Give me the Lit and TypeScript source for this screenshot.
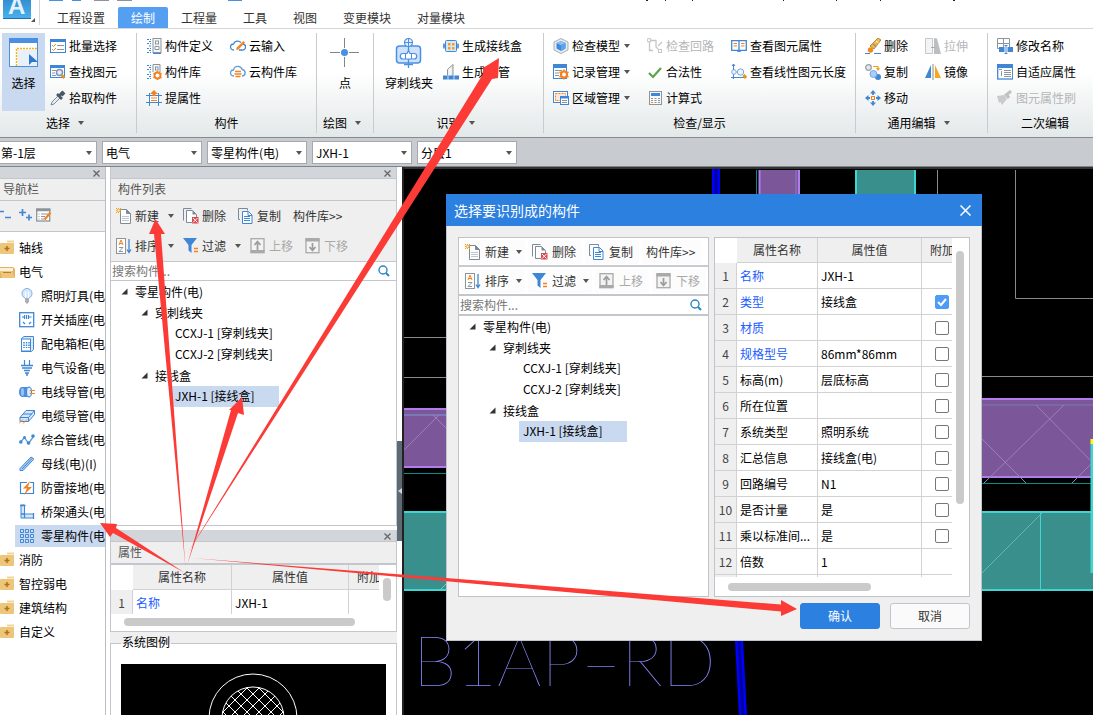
import { LitElement, html, svg, css, nothing } from "lit";
import { customElement, property } from "lit/decorators.js";
import { classMap } from "lit/directives/class-map.js";

const B = "#3f87d4";
const O = "#f58220";
const G = "#8b959b";

/* 16 x 16 glyphs, keyed by name */
const glyphs: Record<string, unknown> = {
  batch: svg`<rect x=".5" y="1.5" width="15" height="13" fill="#fff" stroke="${B}"/><rect x="0" y="1" width="16" height="3" fill="${B}"/><path d="M2 7l1.500 1.500L6 6M2 11l1.500 1.500L6 10" fill="none" stroke="${O}"/><path d="M7 7.500h7M7 11.500h7" stroke="${G}"/>`,
  find: svg`<rect x=".5" y="1.500" width="14" height="12" fill="#fff" stroke="${B}"/><rect x="0" y="1" width="15" height="3" fill="${B}"/><path d="M2 6.500h4M2 9h3M2 11.500h4" stroke="${G}"/><circle cx="9.500" cy="8.500" r="3" fill="#e6eef8" stroke="#7a94bd" stroke-width="1.500"/><path d="M11.500 11l3 3" stroke="#e8951c" stroke-width="2.600"/>`,
  pick: svg`<path d="M1 15l1-3 6-6 2 2-6 6z" fill="#e6edf5" stroke="#7d8b98"/><path d="M7 4l5 5M9 6l4-4" stroke="#4a5864" stroke-width="2.600"/><path d="M11 5l3-3" stroke="#4a5864" stroke-width="4"/>`,
  define: svg`<path d="M1 1.500h4M1 5.500h4M1 10.500h4M1 14.500h4M3 3.500h2M3 8h2M3 12.500h2" stroke="${B}" stroke-dasharray="2 1"/><rect x="7" y=".5" width="8" height="14" fill="#f4f6f8" stroke="${G}"/><path d="M7 15.500h8" stroke="${B}"/><rect x="9.500" y="3" width="3" height="3" fill="#fff" stroke="${G}"/><path d="M9 8.500h4v3H9z" fill="#fff" stroke="${G}"/>`,
  lib: svg`<path d="M1 1.500h4M1 5.500h4M1 10.500h4M1 14.500h4M3 3.500h2M3 8h2M3 12.500h2" stroke="${B}" stroke-dasharray="2 1"/><path d="M7 8V.5h7V8" fill="#f4f6f8" stroke="${G}"/><rect x="9.500" y="3" width="2.500" height="3" fill="#fff" stroke="${G}"/><circle cx="11.500" cy="11.500" r="3" fill="#fff" stroke="${O}" stroke-width="2"/><path d="M11.500 7v2M11.500 14v2M7.500 9.200l1.500 1M14 13l1.500 1M7.500 13.800l1.500-1M14 10l1.500-1" stroke="${O}" stroke-width="1.500"/>`,
  attr: svg`<path d="M0 5.500h16M0 12.500h16M3.500 3v13M12.500 3v13" stroke="${B}"/><rect x="4" y="6" width="8" height="6" fill="#fff"/><path d="M8 0l4 4H9.500v2h-3V4H4z" fill="${O}"/><path d="M5 8h6M5 10.500h6" stroke="${O}"/>`,
  cloudin: svg`<path d="M4 12H3.500a3 3 0 0 1 0-6A4.500 4.500 0 0 1 11 4.500" fill="none" stroke="${B}" stroke-width="1.300"/><path d="M13 6a3 3 0 0 1-1 6H9" fill="none" stroke="${B}" stroke-width="1.300"/><path d="M6 12l.8-2.500L13.500 3l1.500 1.500-6.500 7z" fill="${O}"/>`,
  cloudlib: svg`<path d="M4 12H3.500a3 3 0 0 1 0-6 4.500 4.500 0 0 1 8.700-.5A3.300 3.300 0 0 1 12.500 12H12" fill="none" stroke="#5e9adb" stroke-width="1.300"/><path d="M5 7.500h6M4.500 10h7M5.500 12.500h5" stroke="${O}" stroke-width="1.300"/>`,
  box: svg`<path d="M0 8h16" stroke="${B}"/><path d="M1 5.500v5M15 5.500v5" stroke="${B}" stroke-width="1.500"/><rect x="2.500" y="2.500" width="11" height="11" rx="1" fill="#d6e7fb" stroke="${B}"/><path d="M5 5h2.500v2.500H5zM9 5h2.500v2.500H9zM5 9h2.500v2.500H5zM9 9h2.500v2.500H9z" fill="#f0a020"/>`,
  pipe: svg`<path d="M4.500 12V5.500L10 .5v11.500" fill="#e9edf0" stroke="${G}"/><path d="M7 12V4" stroke="#fff"/><rect x="0" y="11.500" width="16" height="4" fill="${B}"/><path d="M5 11v5M11 11v5" stroke="#cfe0f4"/>`,
  model: svg`<path d="M8 .5l7 3.500v8l-7 3.500L1 12V4z" fill="#e8edf1" stroke="#a5adb3"/><path d="M8 3l4.500 2v5.500L8 13l-4.500-2.500V5z" fill="#3d8be0"/><path d="M8 3l4.500 2L8 7.300 3.500 5z" fill="#8fc0f5"/><path d="M8 7.300V13l4.500-2.500V5z" fill="#5fa3ea"/>`,
  record: svg`<rect x=".5" y="1" width="13" height="13.500" fill="#fff" stroke="${B}"/><rect x="0" y="0" width="14" height="4" fill="${B}"/><path d="M2 6.500h7M2 9h4M2 11.500h4" stroke="${G}"/><circle cx="11" cy="10.500" r="3" fill="#fff" stroke="${O}" stroke-width="2.200"/><path d="M11 5.500v2M11 13.500v2M6.500 8l2 1M13.500 12l2 1M6.500 13l2-1M13.500 9l2-1" stroke="${O}" stroke-width="1.600"/>`,
  region: svg`<rect x=".5" y="1.500" width="14" height="11" fill="#fff" stroke="${B}"/><rect x="2.500" y="3.500" width="10" height="7" fill="#fbe9db" stroke="${O}" stroke-dasharray="2 1"/><rect x="7.500" y="6.500" width="8" height="8" fill="#fff" stroke="${B}"/><path d="M7 7.500h9" stroke="${B}" stroke-width="2"/><path d="M9 10.500h5M9 12.500h5" stroke="${G}"/>`,
  circuit: svg`<path d="M2.500 3v9.500H6M3 2.500h6V9l2 2M11 8l4-4M12 13.500h2" fill="none" stroke="#c3c6c8" stroke-width="1.300"/><rect x=".7" y=".7" width="3" height="3" fill="#fff" stroke="#c3c6c8"/><rect x="11.500" y="11.500" width="3" height="3" fill="#fff" stroke="#c3c6c8"/>`,
  legal: svg`<path d="M2 9l4 4 8-9" fill="none" stroke="#5aa346" stroke-width="2.200"/>`,
  calc: svg`<rect x="2.500" y="1.500" width="12" height="13" fill="#f6f8f9" stroke="${G}"/><rect x="4" y="3" width="9" height="3" fill="${B}"/><path d="M4 8.500h9M4 10.500h9M4 12.500h9" stroke="${G}" stroke-dasharray="2 1.500"/><path d="M4 10.500h2M4 12.500h2" stroke="${O}"/>`,
  book: svg`<path d="M.7 2.700h14.600v9.600H.7z" fill="#fff" stroke="${B}" stroke-width="1.300"/><path d="M8 3v11M6 13h4" stroke="${B}" stroke-width="1.300"/><path d="M2.500 5.500h3.500M2.500 8h3.500M10 5.500h3.500M10 8h3.500" stroke="${O}" stroke-width="1.200"/>`,
  length: svg`<path d="M2.500 0v15M1 2l1.500-2L4 2M0 13.500h15" fill="none" stroke="${B}"/><circle cx="3" cy="8" r="2.300" fill="#eef4fb" stroke="#7aa5d8"/><circle cx="9.500" cy="8" r="3.200" fill="#eef4fb" stroke="#7aa5d8"/><path d="M12.500 11l2.500 3" stroke="#e8951c" stroke-width="3"/>`,
  erase: svg`<path d="M0 15.500h5M9 15.500h7" stroke="${B}"/><path d="M13 0l3 2-7 9-4-3z" fill="#f4b942" stroke="#8a6a2a" stroke-width=".7"/><path d="M11 3l2.500 2" stroke="#fff6d8"/><path d="M8 6l3 2.500" stroke="#8f8f8f" stroke-width="1.500"/><circle cx="5.500" cy="12" r="2.700" fill="#f58a1c"/>`,
  stretch: svg`<path d="M.5.5h7v15h-7z" fill="#f4f4f4" stroke="#c6c9cb"/><path d="M9 0l3 .5L16 16H9z" fill="#bcbfc1"/><path d="M6 9.500h4" stroke="#aaa"/>`,
  dup: svg`<circle cx="3.500" cy="3.500" r="2.800" fill="#e6e9eb" stroke="#9aa2a8" stroke-width="1.300"/><path d="M8 2.500h5V5M11.500 4l1.500 2 1.500-2" fill="none" stroke="#f0a020" stroke-width="1.200"/><circle cx="13" cy="13" r="3" fill="#3f87d4"/><circle cx="8.500" cy="10" r="3.500" fill="#a9cdf5" stroke="#6fa8e8"/>`,
  mirror: svg`<path d="M6 1v13H0z" fill="${B}"/><path d="M10 1v13h6z" fill="#f7a81b"/><path d="M8 0v16" stroke="#8a8a8a"/>`,
  move: svg`<path d="M8 0l3 3.500H5zM8 16l3-3.500H5zM0 8l3.500-3v6zM16 8l-3.500-3v6z" fill="${B}"/><path d="M8 2v3M8 11v3M2 8h3M11 8h3" stroke="${B}" stroke-width="1.800"/><rect x="6.500" y="6.500" width="3" height="3" fill="#fff" stroke="${O}"/>`,
  rename: svg`<path d="M.5.5h12v10H.5zM6.500.5v10M.5 5.500h12" fill="none" stroke="${G}"/><rect x="2" y="9" width="14" height="5" fill="${B}"/><path d="M9 7v9M7 7.500h4M7 15.500h4" stroke="#fff" stroke-width="3"/><path d="M9 7v9M7.500 7.500h3M7.500 15.500h3" stroke="${B}"/>`,
  adapt: svg`<rect x=".7" y="1" width="15" height="14" fill="#fff" stroke="${B}" stroke-width="1.300"/><rect x="0" y="0" width="16" height="4" fill="${B}"/><path d="M2 5.500h3M4.500 7v5" stroke="${G}"/><path d="M7 6.500h7M7 8.500h7M7 10.500h7M7 12.500h7" stroke="${G}"/>`,
  brush: svg`<path d="M0 6l7-1 3 4-5 6-1.500-3-1.500 1z" fill="#c9cbcc"/><path d="M8 6l6-5M9 4l3 4" stroke="#bfc2c4" stroke-width="3"/>`,
  create: svg`<path d="M4.500 1.500h6l4 4v10h-10z" fill="#fff" stroke="#7d8b98"/><path d="M10.500 1.500v4h4" fill="#7d8b98" stroke="#7d8b98"/><path d="M6 8.500h7M6 10.500h7M6 12.500h7" stroke="#bfc7cd"/><path d="M0 0l5 5M5 0L0 5M2.500 0v5M0 2.500h5" stroke="#f0a020"/><rect x="1.500" y="1.500" width="2" height="2" fill="#fff6d0"/>`,
  remove: svg`<path d="M.5 12.500V.5h8" fill="none" stroke="#7d8b98"/><path d="M3.500 2.500h6l4 4v8h-10z" fill="#fff" stroke="#7d8b98"/><path d="M9.500 2.500l4 4h-4z" fill="#7d8b98"/><rect x="9" y="9" width="6.500" height="6.500" fill="#d9494f"/><path d="M10 10l4.500 4.500M14.500 10L10 14.500" stroke="#fff"/>`,
  copy: svg`<path d="M2 11.500H.5V.5h9v2" fill="none" stroke="#7d8b98"/><path d="M4.500 3.500h6l3.500 3.500v8.500H4.500z" fill="#fff" stroke="${B}"/><path d="M10 3.500v4h4" fill="none" stroke="${B}"/><path d="M6 8.500h6M6 10.500h6M6 12.500h6" stroke="${B}"/>`,
  sort: svg`<rect x=".5" y=".5" width="9" height="15" fill="#fff" stroke="${G}"/><path d="M3 7l2-5 2 5M3.500 5.500h3" fill="none" stroke="${O}"/><path d="M3 9.500h4l-4 4h4" fill="none" stroke="${G}"/><path d="M13 1v13M11 11.500l2 3 2-3" fill="none" stroke="${B}" stroke-width="1.300"/>`,
  filter: svg`<path d="M0 0h14L8.500 7v8l-3-2.500V7z" fill="${B}"/><path d="M11 10.500h4M11 13.500h4" stroke="${O}" stroke-width="1.300"/>`,
  up: svg`<rect x="1" y=".7" width="13" height="14" fill="#f3f3f3" stroke="#a9a9a9" stroke-width="1.300"/><path d="M.5 13.500h14" stroke="#a9a9a9" stroke-width="3"/><path d="M7.500 12V4M4.500 7l3-3.500 3 3.500" fill="none" stroke="#9c9c9c" stroke-width="1.700"/>`,
  down: svg`<rect x="1" y=".7" width="13" height="14" fill="#f3f3f3" stroke="#a9a9a9" stroke-width="1.300"/><path d="M.5 2h14" stroke="#a9a9a9" stroke-width="3"/><path d="M7.500 5v7M4.500 9l3 3.500 3-3.500" fill="none" stroke="#9c9c9c" stroke-width="1.700"/>`,
  folder: svg`<path d="M7 1.500h7" stroke="#f3d497" stroke-width="2"/><rect x="0" y="3" width="14" height="11" rx="1" fill="#eec679"/><path d="M7 6v5M4.500 8.500h5" stroke="#a87420" stroke-width="1.500"/>`,
  folderopen: svg`<path d="M0 3h13l2 2v9H0z" fill="#e3b25e"/><path d="M0 4h13v3H0z" fill="#fbf1d8"/><path d="M0 7h12l3 7H2z" fill="#eec679"/><path d="M3 8.500h8" stroke="#b57f2b"/>`,
  lamp: svg`<circle cx="8" cy="5.500" r="5" fill="#d8e9fb" stroke="#7fb0e6"/><path d="M6.500 4v6M9.500 4v6" stroke="#fff"/><path d="M6 10h4v4l-2 2-2-2z" fill="#a8afb5"/>`,
  socket: svg`<rect x=".7" y=".7" width="14" height="14" fill="#fff" stroke="${B}" stroke-width="1.300"/><path d="M3 5h2.500M5.500 3v4M7.500 3v4M9.500 3v4M10 5h2.500M4 10l2 2M12 10l-2 2" stroke="${B}" stroke-width="1.200"/>`,
  cabinet: svg`<path d="M2.500 2.500L5 .5h9.500v13l-2 2h-10z" fill="#dceafa" stroke="${B}"/><rect x="2.500" y="3" width="9" height="12" fill="#fff" stroke="${B}"/><path d="M5 6v6M7.500 6v6M10 6v6" stroke="${B}" stroke-width="1.500" stroke-dasharray="1.500 1"/>`,
  device: svg`<path d="M5.500 0v5M10.500 0v5" stroke="${B}" stroke-width="1.200"/><path d="M2 5.500h12M3 8h10M5 10.500h6M6 13h4M8 13v3" stroke="${B}" stroke-width="1.500"/>`,
  wire: svg`<path d="M3 3h8v10H3A3 5 0 0 1 3 3z" fill="#4a90df"/><ellipse cx="10" cy="8" rx="2.500" ry="5" fill="#d6e7fb" stroke="${B}"/><path d="M11 6.500h5M11 9.500h5" stroke="${O}"/><ellipse cx="3.500" cy="8" rx="1.500" ry="4" fill="#9dc5f3"/>`,
  cable: svg`<path d="M1 9.500l6-7h8.500v4l-6 7H1z" fill="#d6e7fb" stroke="${B}"/><path d="M1 9.500h8.500l6-7M9.500 9.500v4M4 6h9" fill="none" stroke="${B}"/><path d="M0 15.500l4-4M4 15.500l4-4" stroke="${O}"/>`,
  lines: svg`<path d="M1.500 10l4-4.500 4 6 5-7" fill="none" stroke="#5e9adb" stroke-width="1.300"/><circle cx="1.800" cy="10" r="1.800" fill="${B}"/><circle cx="5.500" cy="5.500" r="1.500" fill="${B}"/><circle cx="9.500" cy="11" r="1.800" fill="${B}"/><circle cx="14" cy="4" r="1.800" fill="${B}"/>`,
  bus: svg`<path d="M1 12.500L12 1l2.500 1.500v1L4 14.500H1z" fill="#a9cdf5" stroke="${B}"/><path d="M3 13L13 2.500" stroke="${B}"/>`,
  bolt: svg`<path d="M8 2.500H1.500v11H8M11 2.500h3.500v11H8" fill="#fff" stroke="${B}" stroke-width="1.200"/><path d="M11 1L4 8.500h4L5 15l8-8H9z" fill="${O}"/>`,
  elbow: svg`<path d="M2 1h3.500v9h9v4H2z" fill="#d6e7fb" stroke="${B}"/><path d="M1 1.500h5.500M14.500 9v6M2 10h3.500v4" fill="none" stroke="${B}" stroke-width="1.300"/>`,
  grid: svg`<g fill="#cfe2f8" stroke="${B}"><path d="M1.500 1.500h3v3h-3zM6.500 1.500h3v3h-3zM11.500 1.500h3v3h-3zM1.500 6.500h3v3h-3zM6.500 6.500h3v3h-3zM11.500 6.500h3v3h-3zM1.500 11.500h3v3h-3zM6.500 11.500h3v3h-3zM11.500 11.500h3v3h-3z"/></g>`,
  minus: svg`<path d="M0 4.500h4M5 10.500h6" stroke="${B}" stroke-width="1.600"/>`,
  plus: svg`<path d="M1 5.500h7M4.500 2v7M8 10.500h6M11 7.500v6" stroke="${B}" stroke-width="1.700"/>`,
  edit: svg`<rect x=".7" y="2" width="13" height="12" fill="#fff" stroke="${G}" stroke-width="1.300"/><path d="M0 3h14.500" stroke="${G}" stroke-width="2.500"/><path d="M2.500 7h1M5 7h7M2.500 9.500h1M5 9.500h4M2.500 12h1M5 12h3" stroke="${G}"/><path d="M8.500 12.500l6-7" stroke="${O}" stroke-width="2.200"/>`,
  search: svg`<circle cx="7" cy="7" r="4" fill="none" stroke="#2b86c5" stroke-width="1.400"/><path d="M10 10l3 3" stroke="#2b86c5" stroke-width="2"/>`,
};

const icon = (name: string) =>
  html`<svg class="ico" width="16" height="16" viewBox="0 0 16 16" aria-hidden="true">${glyphs[name]}</svg>`;
const caret = () =>
  html`<svg class="caret" width="6" height="4" viewBox="0 0 6 4" aria-hidden="true"><path d="M0 0h6L3 4z" fill="#555"/></svg>`;

const base = css`
  * { box-sizing: border-box; }
  button, input, select { font: inherit; color: inherit; margin: 0; }
  button { border: 0; background: none; padding: 0; white-space: nowrap; cursor: default; }
  svg { display: block; flex: none; }
`;

type Item = { icon: string; text: string; menu?: boolean; off?: boolean };

@customElement("ribbon-group")
class RibbonGroup extends LitElement {
  @property() label = "";
  @property({ type: Boolean }) menu = false;
  @property({ attribute: false }) columns: Item[][] = [];
  static styles = [base, css`
    :host { display: flex; flex-direction: column; flex: none; border-right: 1px solid #c9cccf; }
    .body { display: flex; flex: 1; padding: 0 9px; }
    .col { display: flex; flex: none; flex-direction: column; margin-right: 17px; }
    .item { display: flex; align-items: center; gap: 3px; height: 26px; }
    .off { color: #b4b6b8; }
    .label { display: flex; align-items: center; justify-content: center; gap: 8px; height: 20px; }
    .menu { padding-right: 6px; }
    .item .caret { margin-left: 1px; }
  `];
  render() {
    return html`
      <div class="body">
        <slot></slot>
        ${this.columns.map(c => html`<div class="col">${c.map(i => html`
          <button class=${classMap({ item: true, off: !!i.off })} ?disabled=${!!i.off}>${icon(i.icon)}<span>${i.text}</span>${i.menu ? caret() : nothing}</button>`)}</div>`)}
      </div>
      <div class=${classMap({ label: true, menu: this.menu })}><span>${this.label}</span>${this.menu ? caret() : nothing}</div>`;
  }
}

@customElement("component-list")
class ComponentList extends LitElement {
  static styles = [base, css`
    :host { display: flex; flex-direction: column; flex: 1; min-height: 0; min-width: 0; --line: #c3c6cb; }
    .tools { display: flex; flex-direction: column; background: var(--bar, #efefef); border-bottom: var(--find-line, 1px) solid var(--line); }
    .row { display: flex; box-sizing: content-box; align-items: center; gap: var(--tool-gap, 2px); height: var(--tool-h, 30px); padding-left: var(--tool-left, 1px); }
    .row + .row { border-top: var(--row-line, 0); }
    .tool { display: flex; align-items: center; gap: var(--icon-gap, 3px); height: 24px; padding: 0 6px 0 4px; border-radius: 3px; background: var(--tool-bg, none); color: #333; }
    .tool .caret { margin: 0 -3px 0 var(--caret-gap, 6px); }
    .tool:disabled { color: #a9a9a9; }
    .find { display: flex; align-items: center; height: var(--find-h, 19px); background: #fff; border-bottom: var(--find-line, 1px) solid var(--line); padding: 0 4px 0 1px; }
    .find input { flex: 1; min-width: 0; border: 0; outline: 0; padding: 0; height: 16px; line-height: 16px; background: none; }
    .find input::placeholder { color: #777; opacity: 1; }
    .tree { flex: 1; min-height: 0; margin: 0; padding: 0; list-style: none; background: #fff; overflow: hidden; }
    .node { display: flex; align-items: center; height: 21px; gap: 7px; }
    .l0 { padding-left: 10px; }
    .l1 { padding-left: 30px; }
    .l2 { padding-left: 60px; }
    .leaf { display: block; height: 21px; line-height: 20px; padding: 0 24px 0 4px; }
    .on { background: #c9d9f0; }
  `];
  render() {
    const tool = (i: string, t: string, menu = false, off = false) =>
      html`<button class="tool" ?disabled=${off}>${i ? icon(i) : nothing}<span>${t}</span>${menu ? caret() : nothing}</button>`;
    const arrow = html`<svg width="7" height="7" viewBox="0 0 7 7" aria-hidden="true"><path d="M6.500 .5v6H.5z" fill="#333"/></svg>`;
    return html`
      <div class="tools">
        <div class="row">${tool("create", "新建", true)}${tool("remove", "删除")}${tool("copy", "复制")}${tool("", "构件库>>")}</div>
        <div class="row">${tool("sort", "排序", true)}${tool("filter", "过滤", true)}${tool("up", "上移", false, true)}${tool("down", "下移", false, true)}</div>
      </div>
      <div class="find"><input type="text" aria-label="搜索构件" placeholder="搜索构件..." />${icon("search")}</div>
      <ul class="tree">
        <li class="node l0">${arrow}<span>零星构件(电)</span></li>
        <li class="node l1">${arrow}<span>穿刺线夹</span></li>
        <li class="node l2"><span class="leaf">CCXJ-1 [穿刺线夹]</span></li>
        <li class="node l2"><span class="leaf">CCXJ-2 [穿刺线夹]</span></li>
        <li class="node l1">${arrow}<span>接线盒</span></li>
        <li class="node l2"><span class="leaf on">JXH-1 [接线盒]</span></li>
      </ul>`;
  }
}

type Prop = { name: string; value: string; link?: boolean; check?: boolean };

@customElement("property-table")
class PropertyTable extends LitElement {
  @property({ attribute: false }) rows: Prop[] = [];
  static styles = [base, css`
    :host { display: block; overflow: hidden; }
    table { table-layout: fixed; width: 0; border-collapse: separate; border-spacing: 0; }
    .num { width: 22px; }
    .name { width: var(--c1, 81px); }
    .val { width: var(--c2, 104px); }
    .extra { width: 50px; }
    th, td { height: 26px; padding: 0 3px; border-right: 1px solid #d2d2d2; border-bottom: 1px solid #d2d2d2; font-weight: normal; line-height: 18px; text-align: left; white-space: nowrap; overflow: hidden; background: #fff; }
    thead th { height: 25px; background: #efefef; text-align: center; color: #333; }
    thead td { height: 25px; border-color: #fff; }
    tbody th { background: #efefef; text-align: center; color: #444; padding: 0; }
    thead .add { text-align: left; padding-left: 8px; }
    .box { padding-left: 13px; }
    .link { color: #1a5cff; }
    input { appearance: none; display: block; width: 14px; height: 14px; border: 1px solid #777; border-radius: 2px; background: #fff; }
    input:checked { border-color: #4d9cf5; background: #4d9cf5; }
    .cb { display: grid; width: 14px; }
    .cb > * { grid-area: 1 / 1; }
    .cb svg { pointer-events: none; }
  `];
  render() {
    return html`<table>
      <colgroup><col class="num" /><col class="name" /><col class="val" /><col class="extra" /></colgroup>
      <thead><tr><td></td><th scope="col">属性名称</th><th scope="col">属性值</th><th class="add" scope="col">附加</th></tr></thead>
      <tbody>${this.rows.map((r, i) => html`<tr>
        <th scope="row">${r.name ? i + 1 : nothing}</th>
        <td class=${classMap({ link: !!r.link })}>${r.name}</td>
        <td>${r.value}</td>
        <td class="box">${r.check === undefined ? nothing : html`<label class="cb"><input type="checkbox" aria-label=${r.name} .checked=${r.check} />${r.check
          ? html`<svg width="14" height="14" viewBox="0 0 14 14" aria-hidden="true"><path d="M3 7l3 3 5-6" fill="none" stroke="#fff" stroke-width="2"/></svg>` : nothing}</label>`}</td>
      </tr>`)}</tbody></table>`;
  }
}

const dialogRows: Prop[] = [
  { name: "名称", value: "JXH-1", link: true },
  { name: "类型", value: "接线盒", link: true, check: true },
  { name: "材质", value: "", link: true, check: false },
  { name: "规格型号", value: "86mm*86mm", link: true, check: false },
  { name: "标高(m)", value: "层底标高", check: false },
  { name: "所在位置", value: "", check: false },
  { name: "系统类型", value: "照明系统", check: false },
  { name: "汇总信息", value: "接线盒(电)", check: false },
  { name: "回路编号", value: "N1", check: false },
  { name: "是否计量", value: "是", check: false },
  { name: "乘以标准间...", value: "是", check: false },
  { name: "倍数", value: "1" },
  { name: "", value: "" },
];

@customElement("app-root")
class AppRoot extends LitElement {
  static styles = [base, css`
    :host { position: relative; display: flex; flex-direction: column; height: 100vh; overflow: hidden; background: #fff; color: #000; font: 12px/18px "Noto Sans CJK SC", "Noto Sans", sans-serif; }
    .top { display: flex; align-items: flex-end; height: 29px; border-bottom: 1px solid #d5d5d5; }
    .logo { align-self: flex-start; width: 44px; }
    .quick { position: absolute; left: 44px; top: 0; }
    .tab { height: 21px; padding: 0 13px; color: #333; }
    .tab.on { background: #559ff3; color: #fff; border-radius: 2px 2px 0 0; }
    .ribbon { display: flex; height: 109px; padding: 4px 0; background: linear-gradient(#fff 40%, #e3e8e9); border-bottom: 1px solid #868b8f; }
    .g1 { width: 137px; }
    .g2 { width: 180px; }
    .g3 { width: 57px; }
    .g4 { width: 170px; }
    .g5 { width: 312px; }
    .g6 { width: 132px; }
    .g7 { flex: 1 0 108px; border-right: 0; }
    .big { display: flex; flex: none; flex-direction: column; align-items: center; gap: 6px; height: 78px; padding-top: 5px; }
    .pick { width: 43px; margin: 0 5px 0 -7px; background: #c9d9f0; }
    .dot { width: 38px; }
    .clip { margin: 0 10px 0 2px; }
    .combos { display: flex; gap: 5px; height: 29px; padding-top: 3px; background: #c8cbd0; border-bottom: 1px solid #7d868b; }
    .combo { display: grid; width: 100px; height: 23px; }
    .combo:first-child { margin-left: -3px; }
    .combo > * { grid-area: 1 / 1; }
    .combo .caret { justify-self: end; align-self: center; margin-right: 5px; pointer-events: none; }
    select { appearance: none; width: 100px; height: 23px; padding: 0 14px 0 3px; border: 1px solid #a5a8ac; border-radius: 0; background: #fff; }
    .main { display: flex; flex: 1; min-height: 0; }
    .strip { display: flex; justify-content: flex-end; align-items: flex-end; height: 12px; padding: 0 5px 1px 0; background: #d2d5da; border-bottom: 1px solid #c3c6cb; }
    .head { height: 22px; padding-left: 7px; line-height: 20px; background: #efefef; color: #555; border-bottom: 1px solid #c3c6cb; }
    .nav { width: 106px; flex: none; border-right: 1px solid #b9bcc1; overflow: hidden; }
    .nav .head { padding-left: 3px; }
    .navtools { display: flex; align-items: center; gap: 2px; height: 31px; padding-bottom: 3px; background: #efefef; border-bottom: 1px solid #c3c6cb; }
    .navlist { display: flex; flex-direction: column; margin: 0; padding: 4px 0 0; list-style: none; }
    .navlist li { display: flex; align-items: center; height: 24px; gap: 3px; white-space: nowrap; }
    .navlist .sub { height: 22px; margin: 1px 0 1px 15px; padding-left: 4px; gap: 6px; }
    .navlist .on { background: #c9d9f0; }
    .mid { display: flex; flex-direction: column; width: 287px; flex: none; margin-left: 4px; }
    .panel { display: flex; flex-direction: column; border: 1px solid #c3c6cb; border-top: 0; }
    .list { flex: 1; min-height: 0; margin-bottom: 4px; }
    .props .head { height: 23px; border-bottom-width: 2px; }
    .frame { display: grid; grid-template-columns: 1fr 17px; grid-template-rows: auto 1fr; }
    .frame.small { height: 66px; --c1: 99px; --c2: 117px; grid-template-columns: 268px 1fr; grid-template-rows: 49px 1fr; }
    .v, .h { border-radius: 4px; background: #cacaca; }
    .v { width: 8px; margin-left: 4px; }
    .h { height: 8px; }
    .small .v { height: 23px; margin-top: 13px; }
    .small .h { width: 231px; margin: 4px 0 0 13px; }
    .legend { height: 83px; background: #efefef; padding-top: 11px; overflow: hidden; }
    .group { height: 90px; border: 1px solid #c3c6cb; background: #fff; padding: 0 10px; }
    .group span { display: block; width: max-content; margin: -11px 0 0; padding: 0 1px; height: 18px; background: linear-gradient(#efefef 60%, #fff 60%); }
    .group svg { margin-top: 13px; background: #000; width: 100%; }
    .split { width: 5px; flex: none; }
    .grip { height: 100px; margin-top: 274px; padding: 47px 0 0 1px; background: #5c6a75; }
    .canvas { position: relative; flex: 1; min-width: 0; background: #000; overflow: hidden; }
    .dlg { position: absolute; left: 446px; top: 194px; width: 536px; background: #efefef; border: 1px solid #c0c4cc; border-top: 0; }
    .title { display: flex; align-items: center; justify-content: space-between; height: 32px; margin: 0 -1px; padding: 0 11px 0 8px; background: #2c80e0; color: #fff; font-size: 14px; line-height: 20px; }
    .title h2 { margin: 0; font: inherit; }
    .cols { display: flex; gap: 5px; padding: 11px 11px 0; }
    .lp, .rp { height: 360px; border: 1px solid #c0c3c8; background: #fff; }
    .lp { display: flex; flex: none; width: 251px; --bar: #fff; --tool-bg: #fcfcfc; --tool-gap: 3px; --tool-h: 27px; --tool-left: 2px; --icon-gap: 4px; --caret-gap: 3px; --find-h: 20px; --find-line: 2px; --row-line: 2px solid #c8cbd0; }
    .rp { flex: 1; min-width: 0; }
    .rp .frame { height: 358px; grid-template-rows: 339px 1fr; }
    .rp .v { height: 253px; margin-top: 13px; }
    .rp .h { width: 143px; margin: 6px 0 0 13px; }
    .btns { display: flex; justify-content: flex-end; gap: 10px; padding: 6px 11px 11px; }
    .btns button { width: 80px; height: 26px; border-radius: 3px; background: #fafafa; border: 1px solid #c0c4d0; color: #333; }
    .btns .ok { background: #2c80e0; border-color: #2c80e0; color: #fff; }
    .marks { position: absolute; left: 0; top: 0; pointer-events: none; }
    .cad { font: 100 70px/1 Lato, Roboto, sans-serif; }
  `];

  private combo(label: string, value: string) {
    return html`<label class="combo"><select aria-label=${label}><option>${value}</option></select>${caret()}</label>`;
  }

  private close() {
    return html`<svg width="7" height="7" viewBox="0 0 7 7" aria-hidden="true"><path d="M.5 .5l6 6M6.500 .5l-6 6" stroke="#666" stroke-width="1.300"/></svg>`;
  }

  private drawing() {
    return html`<svg width="691" height="548" viewBox="402 167 691 548" aria-hidden="true">
      <path d="M402 167h691" stroke="#333" stroke-width="4"/><path d="M402.500 167v548" stroke="#222" stroke-width="3"/>
      <path d="M716 169v30M739 640l4 76" stroke="#00f" stroke-width="8" fill="none"/>
      <path d="M716 169v30M739 640l4 76" stroke="#00009a" stroke-width="3" fill="none"/>
      <path d="M756.500 170v30" stroke="#0a8a86"/>
      <rect x="759" y="170" width="41" height="30" fill="#7b5799"/><path d="M759.500 170v30M799 170v30" stroke="#b27cf0" stroke-width="2"/><path d="M796 170v30" stroke="#8f7cc4"/>
      <rect x="855" y="170" width="61" height="30" fill="#388f8c"/><path d="M856 170v30M915 170v30" stroke="#3fd6d2" stroke-width="2"/>
      <path d="M937.500 170v30" stroke="#8a8a8a"/>
      <path d="M1015.500 170v128.500h78M404 337.500h45M404 377.500h45M980 376.500h113" stroke="#8a8a8a" fill="none"/>
      <rect x="404" y="408" width="50" height="60" fill="#7b5799"/>
      <path d="M404 409h50M404 467h50" stroke="#b27cf0" stroke-width="2"/><path d="M404 415h50" stroke="#7a79b8" stroke-width="2"/>
      <path d="M404 450l35-35M433 415l14 14" stroke="#9c7fb6" fill="none"/>
      <path d="M404 473.500h50M980 483.500h113" stroke="#0a8a86"/>
      <rect x="404" y="511" width="50" height="80" fill="#388f8c"/><path d="M404 512h50M404 590h50" stroke="#3fd6d2" stroke-width="2"/><path d="M440 590l8-8" stroke="#6cc" />
      <rect x="980" y="398" width="113" height="80" fill="#7b5799"/>
      <path d="M980 399h113M980 477h113" stroke="#b27cf0" stroke-width="2"/><path d="M980 405h113" stroke="#7a79b8"/>
      <path d="M982 439l44 44M1064 405l-80 78M1036 405l57 58M1093 462l-21 21" stroke="#9c7fb6" fill="none"/>
      <rect x="980" y="511" width="113" height="80" fill="#388f8c"/><path d="M980 512h113M980 590h113" stroke="#3fd6d2" stroke-width="2"/>
      <path d="M1040.500 512v78" stroke="#3fd6d2"/><path d="M982 573l60-60" stroke="#6bb5b0"/>
      <path d="M1092 443v130" stroke="#3fd6d2" stroke-width="3"/><path d="M1092 439v5" stroke="#ff0" stroke-width="3"/>
      <text class="cad" x="413" y="686" fill="#8a89ff">B1AP–RD</text>
    </svg>`;
  }

  private symbol() {
    const hatch = Array.from({ length: 13 }, (_, i) => (i - 6) * 12);
    return html`<svg height="60" viewBox="121 664 265 60" preserveAspectRatio="xMidYMin slice" aria-hidden="true">
      <defs><clipPath id="disc"><circle cx="253" cy="718" r="31"/></clipPath></defs>
      <g fill="none" stroke="#fff"><circle cx="253" cy="718" r="44"/><circle cx="253" cy="718" r="31"/>
      <g clip-path="url(#disc)">${hatch.map(o => svg`<path d="M${213 + o} 758l80-80M${213 + o} 678l80 80"/>`)}</g></g></svg>`;
  }

  render() {
    const tabs = ["工程设置", "绘制", "工程量", "工具", "视图", "变更模块", "对量模块"];
    const nav: [string, string, boolean][] = [
      ["folder", "轴线", false], ["folderopen", "电气", false], ["lamp", "照明灯具(电)", true], ["socket", "开关插座(电)", true],
      ["cabinet", "配电箱柜(电)", true], ["device", "电气设备(电)", true], ["wire", "电线导管(电)", true], ["cable", "电缆导管(电)", true],
      ["lines", "综合管线(电)", true], ["bus", "母线(电)(I)", true], ["bolt", "防雷接地(电)", true], ["elbow", "桥架通头(电)", true],
      ["grid", "零星构件(电)", true], ["folder", "消防", false], ["folder", "智控弱电", false], ["folder", "建筑结构", false], ["folder", "自定义", false],
    ];
    return html`
      <header class="top">
        <svg class="logo" width="44" height="26" viewBox="0 0 44 26" role="img" aria-label="A">
          <defs><linearGradient id="lg" x2="0" y2="1"><stop stop-color="#2b7fc4"/><stop offset="1" stop-color="#49b2ee"/></linearGradient></defs>
          <rect x="3" y="-8" width="28" height="27" rx="2" fill="url(#lg)"/><path d="M3 18.500h28" stroke="#1d6fae"/>
          <text x="8" y="14" font-family="Liberation Sans" font-weight="bold" font-size="24" fill="#e4f2fd">A</text>
          <path d="M35 18v4h-4z" fill="#555"/><path d="M39.500 0v25" stroke="#d5d5d5"/></svg>
        <svg class="quick" width="940" height="2" viewBox="44 0 940 2" aria-hidden="true">
          <path d="M49 0h14M72 0h9M228 0h14" stroke="#4a90e2" stroke-width="2"/><path d="M94 0h15M117 0h15" stroke="#8b959b" stroke-width="2"/>
          <path d="M646 0h2M665 0h1M692 0h1M783 0h1M836 0h1M880 0h1M953 0h2" stroke="#222" stroke-width="2"/></svg>
        ${tabs.map(t => html`<button class=${classMap({ tab: true, on: t === "绘制" })}>${t}</button>`)}
      </header>

      <div class="ribbon">
        <ribbon-group class="g1" label="选择" menu .columns=${[[{ icon: "batch", text: "批量选择" }, { icon: "find", text: "查找图元" }, { icon: "pick", text: "拾取构件" }]]}>
          <button class="big pick"><svg width="30" height="30" viewBox="0 0 30 30" aria-hidden="true"><rect x=".5" y=".5" width="28" height="28" fill="#fff" stroke="#4a90e2"/><rect width="29" height="5" fill="#4a90e2"/><path d="M8.500 11.500H28V28H8.500z" fill="#e8f0fa"/><path d="M7.500 28V10.500H28" fill="none" stroke="#f5b21c" stroke-width="1.500" stroke-dasharray="2 1"/><path d="M20 16v11l3-3h6z" fill="#2f78cc"/></svg><span>选择</span></button>
        </ribbon-group>
        <ribbon-group class="g2" label="构件" .columns=${[[{ icon: "define", text: "构件定义" }, { icon: "lib", text: "构件库" }, { icon: "attr", text: "提属性" }], [{ icon: "cloudin", text: "云输入" }, { icon: "cloudlib", text: "云构件库" }]]}></ribbon-group>
        <ribbon-group class="g3" label="绘图" menu>
          <button class="big dot"><svg width="30" height="30" viewBox="0 0 30 30" aria-hidden="true"><path d="M0 14.500h29M14.500 0v29" stroke="#7d868b"/><circle cx="14.500" cy="14.500" r="4.500" fill="#fff"/><circle cx="14.500" cy="14.500" r="3.500" fill="#4a90e2"/></svg><span>点</span></button>
        </ribbon-group>
        <ribbon-group class="g4" label="识别" menu .columns=${[[{ icon: "box", text: "生成接线盒" }, { icon: "pipe", text: "生成套管" }]]}>
          <button class="big clip"><svg width="28" height="30" viewBox="0 0 28 30" aria-hidden="true"><rect x="1.500" y="8" width="24" height="17" rx="3" fill="#cfe2f9" stroke="#4a90e2" stroke-width="1.500"/><path d="M13.500 0v30M9 26.500h9" stroke="#4a90e2" stroke-width="1.300"/><circle cx="13.500" cy="4.500" r="4" fill="#e8f1fc" stroke="#4a90e2" stroke-width="1.200"/><path d="M9 4.500h9M13.500 0v9" stroke="#4a90e2"/><path d="M8 15.500h4l1.500-3 1.500 3h4a2.500 2.500 0 0 1 0 5.500H8a2.500 2.500 0 0 1 0-5.500z" fill="#fff" stroke="#4a90e2" stroke-width="1.200"/><path d="M10.500 15.500V21M16.500 15.500V21" stroke="#4a90e2"/></svg><span>穿刺线夹</span></button>
        </ribbon-group>
        <ribbon-group class="g5" label="检查/显示" .columns=${[
          [{ icon: "model", text: "检查模型", menu: true }, { icon: "record", text: "记录管理", menu: true }, { icon: "region", text: "区域管理", menu: true }],
          [{ icon: "circuit", text: "检查回路", off: true }, { icon: "legal", text: "合法性" }, { icon: "calc", text: "计算式" }],
          [{ icon: "book", text: "查看图元属性" }, { icon: "length", text: "查看线性图元长度" }]]}></ribbon-group>
        <ribbon-group class="g6" label="通用编辑" menu .columns=${[
          [{ icon: "erase", text: "删除" }, { icon: "dup", text: "复制" }, { icon: "move", text: "移动" }],
          [{ icon: "stretch", text: "拉伸", off: true }, { icon: "mirror", text: "镜像" }]]}></ribbon-group>
        <ribbon-group class="g7" label="二次编辑" .columns=${[[{ icon: "rename", text: "修改名称" }, { icon: "adapt", text: "自适应属性" }, { icon: "brush", text: "图元属性刷", off: true }]]}></ribbon-group>
      </div>

      <div class="combos">
        ${this.combo("楼层", "第-1层")}${this.combo("专业", "电气")}${this.combo("构件类型", "零星构件(电)")}${this.combo("构件", "JXH-1")}${this.combo("分层", "分层1")}
      </div>

      <div class="main">
        <nav class="nav">
          <div class="strip">${this.close()}</div>
          <div class="head">导航栏</div>
          <div class="navtools">${icon("minus")}${icon("plus")}${icon("edit")}</div>
          <ul class="navlist">${nav.map(([i, t, sub]) => html`<li class=${classMap({ sub, on: i === "grid" })}>${icon(i)}<span>${t}</span></li>`)}</ul>
        </nav>
        <div class="mid">
          <section class="panel list">
            <div class="strip">${this.close()}</div>
            <div class="head">构件列表</div>
            <component-list></component-list>
          </section>
          <section class="panel props">
            <div class="strip">${this.close()}</div>
            <div class="head">属性</div>
            <div class="frame small">
              <property-table .rows=${[{ name: "名称", value: "JXH-1", link: true }]}></property-table>
              <div class="v"></div><div class="h"></div>
            </div>
          </section>
          <section class="legend"><div class="group"><span>系统图例</span>${this.symbol()}</div></section>
        </div>
        <div class="split"><div class="grip"><svg width="4" height="6" viewBox="0 0 4 6" aria-hidden="true"><path d="M4 0v6L0 3z" fill="#cfd6db"/></svg></div></div>
        <div class="canvas">${this.drawing()}</div>
      </div>

      <section class="dlg" role="dialog" aria-label="选择要识别成的构件">
        <div class="title"><h2>选择要识别成的构件</h2>
          <button aria-label="关闭"><svg width="11" height="11" viewBox="0 0 11 11" aria-hidden="true"><path d="M.5 .5l10 10M10.500 .5l-10 10" stroke="#fff" stroke-width="1.500"/></svg></button></div>
        <div class="cols">
          <div class="lp"><component-list></component-list></div>
          <div class="rp"><div class="frame">
            <property-table .rows=${dialogRows}></property-table>
            <div class="v"></div><div class="h"></div></div></div>
        </div>
        <div class="btns"><button class="ok">确认</button><button>取消</button></div>
      </section>

      <svg class="marks" width="1093" height="715" viewBox="0 0 1093 715" aria-hidden="true"><g fill="#fc3a36">
        <path d="M187 554L483 74l0-6 16-10 -1 20-6 1z"/>
        <path d="M185.500 568L154 234h-5l6.500-15L165 234h-4z"/>
        <path d="M187.500 564L231 410h-2L242 397l2 18-6-2z"/>
        <path d="M185 573L113 533l-3 4-10-14 17 1-1 4z"/>
        <path d="M192 558L781 604.500v-4.500l16 9-16 7v-4.500z"/>
      </g></svg>`;
  }
}
